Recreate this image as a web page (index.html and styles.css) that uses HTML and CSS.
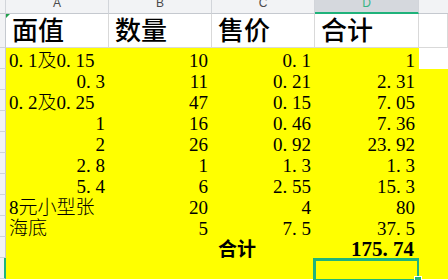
FILE: index.html
```html
<!DOCTYPE html>
<html lang="zh-CN">
<head>
<meta charset="utf-8">
<title>Sheet</title>
<link rel="stylesheet" href="styles.css">
</head>
<body>
<div class="sheet">
  <div class="ch"></div>
  <div class="ch">A</div>
  <div class="ch">B</div>
  <div class="ch">C</div>
  <div class="ch sel">D</div>
  <div class="ch last"></div>

  <div class="rh"></div>
  <div class="cell head flag">面值</div>
  <div class="cell head">数量</div>
  <div class="cell head">售价</div>
  <div class="cell head">合计</div>
  <div class="cell head"></div>

  <div class="rh"></div>
  <div class="cell y">0<span class="pt">.</span>1及0<span class="pt">.</span>15</div>
  <div class="cell y r">10</div>
  <div class="cell y r">0<span class="pt">.</span>1</div>
  <div class="cell y r">1</div>
  <div class="cell"></div>

  <div class="rh"></div>
  <div class="cell y r">0<span class="pt">.</span>3</div>
  <div class="cell y r">11</div>
  <div class="cell y r">0<span class="pt">.</span>21</div>
  <div class="cell y r">2<span class="pt">.</span>31</div>
  <div class="cell y"></div>

  <div class="rh"></div>
  <div class="cell y">0<span class="pt">.</span>2及0<span class="pt">.</span>25</div>
  <div class="cell y r">47</div>
  <div class="cell y r">0<span class="pt">.</span>15</div>
  <div class="cell y r">7<span class="pt">.</span>05</div>
  <div class="cell y"></div>

  <div class="rh"></div>
  <div class="cell y r">1</div>
  <div class="cell y r">16</div>
  <div class="cell y r">0<span class="pt">.</span>46</div>
  <div class="cell y r">7<span class="pt">.</span>36</div>
  <div class="cell y"></div>

  <div class="rh"></div>
  <div class="cell y r">2</div>
  <div class="cell y r">26</div>
  <div class="cell y r">0<span class="pt">.</span>92</div>
  <div class="cell y r">23<span class="pt">.</span>92</div>
  <div class="cell y"></div>

  <div class="rh"></div>
  <div class="cell y r">2<span class="pt">.</span>8</div>
  <div class="cell y r">1</div>
  <div class="cell y r">1<span class="pt">.</span>3</div>
  <div class="cell y r">1<span class="pt">.</span>3</div>
  <div class="cell y"></div>

  <div class="rh"></div>
  <div class="cell y r">5<span class="pt">.</span>4</div>
  <div class="cell y r">6</div>
  <div class="cell y r">2<span class="pt">.</span>55</div>
  <div class="cell y r">15<span class="pt">.</span>3</div>
  <div class="cell y"></div>

  <div class="rh"></div>
  <div class="cell y">8元小型张</div>
  <div class="cell y r">20</div>
  <div class="cell y r">4</div>
  <div class="cell y r">80</div>
  <div class="cell y"></div>

  <div class="rh"></div>
  <div class="cell y">海底</div>
  <div class="cell y r">5</div>
  <div class="cell y r">7<span class="pt">.</span>5</div>
  <div class="cell y r">37<span class="pt">.</span>5</div>
  <div class="cell y"></div>

  <div class="rh"></div>
  <div class="cell y"></div>
  <div class="cell y"></div>
  <div class="cell y b label">合计</div>
  <div class="cell y r b total">175<span class="pt">.</span>74</div>
  <div class="cell y"></div>

  <div class="rh cur"></div>
  <div class="cell y"></div>
  <div class="cell y"></div>
  <div class="cell y"></div>
  <div class="cell y active"></div>
  <div class="cell y"></div>
</div>
</body>
</html>
```

FILE: styles.css
```css
* {
  box-sizing: border-box;
}

body {
  margin: 0;
  background: #ffffff;
}

.sheet {
  display: grid;
  grid-template-columns: 6px 103px 103px 103px 104px 1fr;
  grid-template-rows: 14px 34px repeat(11, 21px);
  width: 448px;
  height: 280px;
  overflow: hidden;
  font-family: "Liberation Serif", "Noto Sans CJK SC", serif;
  font-size: 19px;
  color: #000000;
}

.ch {
  background: #f2f3f5;
  border-right: 1px solid #d2d5da;
  border-bottom: 1px solid #c5c9cf;
  font-family: "Liberation Sans", Arial, sans-serif;
  font-size: 12px;
  line-height: 6px;
  color: #4a4a4a;
  text-align: center;
  overflow: hidden;
}

.ch.sel {
  background: #d5d8dd;
  color: #35b585;
  border-bottom: 2px solid #1fb27a;
}

.ch.last {
  border-right: 0;
}

.rh {
  background: #f2f3f5;
  border-right: 1px solid #c5c9cf;
  border-bottom: 1px solid #d0d3d9;
}

.rh.cur {
  border-right: 2px solid #20b47c;
}

.cell {
  position: relative;
  display: flex;
  align-items: flex-end;
  justify-content: flex-start;
  padding: 0 4px 0 3px;
  line-height: 17px;
  font-weight: 300;
  white-space: nowrap;
}

.r {
  justify-content: flex-end;
}

.y {
  background: #ffff00;
}

.head {
  font-size: 26px;
  font-weight: 500;
  line-height: 30px;
  padding-left: 6px;
  border-right: 1px solid #d9d9d9;
  border-bottom: 1px solid #d9d9d9;
}

.flag::before {
  content: "";
  position: absolute;
  left: 0;
  top: 0;
  border-top: 4px solid #21a04d;
  border-right: 4px solid transparent;
}

.pt {
  display: inline-block;
  width: 0.5em;
}

.b {
  font-weight: 700;
}

.label {
  padding-left: 6px;
}

.total {
  font-size: 21px;
  padding-right: 5px;
}

.active::after {
  content: "";
  position: absolute;
  left: -2px;
  top: 0;
  right: -1px;
  bottom: -3px;
  border: 3px solid #20b47c;
}

.active::before {
  content: "";
  position: absolute;
  left: 99px;
  top: 18px;
  width: 6px;
  height: 6px;
  background: #20b47c;
  border: 1px solid #ffffff;
  z-index: 1;
}
```
